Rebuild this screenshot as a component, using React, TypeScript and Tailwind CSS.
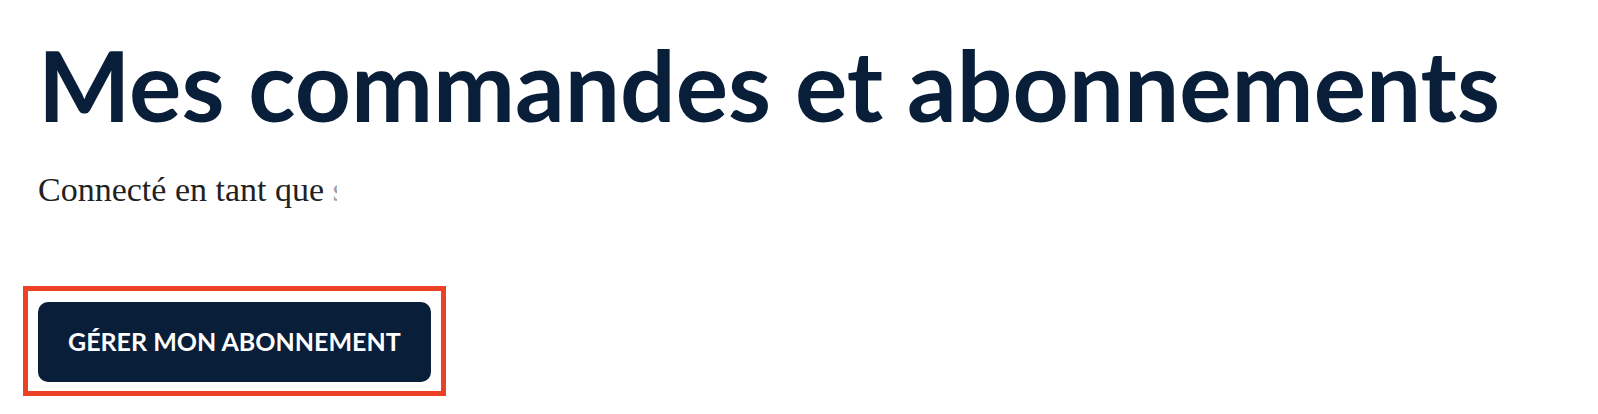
const App = () => {
  return (
    <main className="bg-white px-[38px] pt-9 pb-[18px]">
      <h1 className="whitespace-nowrap font-['Lato','Open_Sans',sans-serif] text-[98px] leading-[96px] font-bold text-[#081e39]">
        Mes commandes et abonnements
      </h1>
      <p className="mt-[34px] flex items-center font-['Liberation_Serif',serif] text-[34px] leading-[48px] whitespace-pre text-[#222222]">
        Connecté en tant que{' '}
        <span className="w-1 overflow-hidden text-gray-400">s</span>
      </p>
      <div className="mt-[72px] -ml-[15px] w-fit border-[5px] border-[#ed4125] px-[10px] pt-[11px] pb-[9px]">
        <button
          type="button"
          className="h-20 cursor-pointer rounded-[10px] bg-[#081e39] px-[30px] font-['Lato',sans-serif] text-[25px] font-bold whitespace-nowrap text-white"
        >
          GÉRER MON ABONNEMENT
        </button>
      </div>
    </main>
  );
};

export default App;
